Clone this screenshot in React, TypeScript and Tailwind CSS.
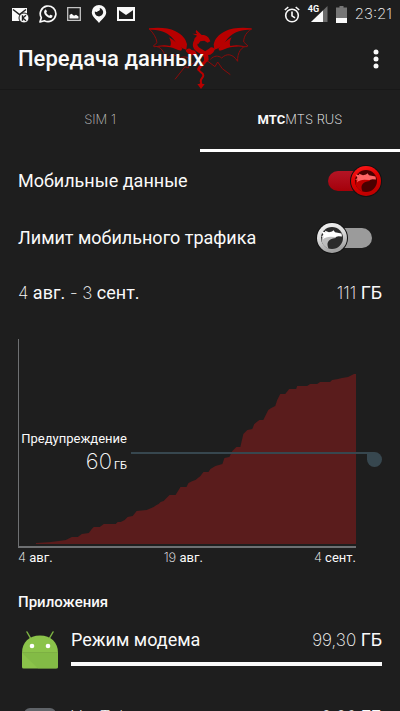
import React, { useState } from "react";
import { clsx } from "clsx";

const THIN = "font-['Inter','Roboto',sans-serif] font-extralight";

const Thin: React.FC<{ children: React.ReactNode; className?: string }> = ({ children, className }) => (
  <span className={clsx(THIN, className)}>{children}</span>
);

const StatusBar: React.FC = () => (
  <div className="flex h-7 items-center justify-between pl-3 pr-2">
    <div className="flex items-center gap-2.5">
      <svg width="17" height="17" viewBox="0 0 17 17">
        <path d="M0 2h15v13H0z" fill="currentColor" />
        <path d="M1 3.500l6.500 5 6.500-5" fill="none" stroke="#1e1e1e" strokeWidth="1.500" />
        <circle cx="12" cy="12" r="5" fill="currentColor" stroke="#1e1e1e" />
        <path d="M10.500 9.300v5.400M14 9.300l-3.200 2.700 3.200 2.700" fill="none" stroke="#1e1e1e" strokeWidth="1.400" />
      </svg>
      <svg width="18" height="18" viewBox="0 0 18 18">
        <path
          d="M1 17l1.300-4.300A7.800 7.800 0 1 1 5.400 15.700z"
          fill="none"
          stroke="currentColor"
          strokeWidth="1.700"
          strokeLinejoin="round"
        />
        <path
          d="M6 4.800c.5-.5 1-.3 1.300.3l.6 1.500c.1.300-.3.800-.7 1.200.7 1.400 1.800 2.300 3.200 2.900.5-.7.900-1.200 1.300-1l1.700.9c.4.300-.1 1.600-.8 2.100-1.200.8-3.500.2-5.400-1.600C5 9 4.300 6.500 6 4.800z"
          fill="currentColor"
        />
      </svg>
      <svg width="14" height="14" viewBox="0 0 14 14">
        <path d="M.7.700h12.600v12.600H.7z" fill="none" stroke="#c4c4c4" strokeWidth="1.300" />
        <path d="M2.500 11.500V8l2-1.200 2.500 2 2-1 2.500 1.700v2z" fill="currentColor" />
      </svg>
      <svg width="16" height="18" viewBox="0 0 16 18">
        <path d="M8 0A7.200 7.200 0 0 0 .8 7.200C.8 11.500 5 14 8 18c3-4 7.200-6.500 7.200-10.800A7.200 7.200 0 0 0 8 0z" fill="currentColor" />
        <path d="M8.500 3a4.200 4.200 0 1 1-4.600 3.200 1.700 1.700 0 0 0 3-.2 1.800 1.800 0 0 0 1.600-3z" fill="#1e1e1e" />
      </svg>
      <svg width="18" height="14" viewBox="0 0 18 14">
        <path d="M1 1h16v12H1z" fill="none" stroke="currentColor" strokeWidth="2" />
        <path d="M1 1h16v1.500L9 8 1 2.500z" fill="currentColor" />
      </svg>
    </div>
    <div className="flex items-center gap-2">
      <svg width="16" height="17" viewBox="0 0 16 17" fill="none" stroke="currentColor" strokeWidth="1.600">
        <circle cx="8" cy="9.500" r="6.300" />
        <path d="M8 5.500v4.300l3 2M.8 4L4.300 1M15.200 4l-3.500-3" />
      </svg>
      <div className="relative h-[18px] w-5">
        <svg width="20" height="18" viewBox="0 0 20 18">
          <path d="M19.500 1v16H3z" fill="#6b6b6b" />
          <path d="M15 5.500V17H3z" fill="currentColor" />
        </svg>
        <span className="absolute left-0 top-0 text-[9px] leading-[9px] font-bold">4G</span>
      </div>
      <svg width="11" height="17" viewBox="0 0 11 17">
        <path d="M3.500 0h4v1.500H11V17H0V1.500h3.500z" fill="#757575" />
        <path d="M0 12h11v5H0z" fill="currentColor" />
      </svg>
      <time className={clsx(THIN, "text-[15px] leading-5")}>23:21</time>
    </div>
  </div>
);

const Dragon: React.FC = () => (
  <svg
    width="110"
    height="70"
    viewBox="0 0 330 210"
    className="absolute left-[145px] top-[-6px]"
    aria-hidden="true"
  >
    <g fill="#b80000">
      <path d="M12 19c30-4 60-1 78 8 24 12 32 24 36 40l-2 16c-14-4-26-10-31-20-9-16-25-30-43-35-12-4-24-5-38-5z" />
      <path d="M72 46c14 8 28 20 40 34l-4 6c-12-2-20-8-32-10-16-3-34-3-50 0 14-6 32-8 50-4 4-8 0-18-4-26z" />
      <path d="M320 19c-30-4-60-1-78 8-24 12-32 24-36 40l2 16c14-4 26-10 31-20 9-16 25-30 43-35 12-4 24-5 38-5z" />
      <path d="M260 46c-14 8-28 20-40 34l4 6c12-2 20-8 32-10 16-3 34-3 50 0-14-6-32-8-50-4-4-8 0-18 4-26z" />
      {/* head, facing right, with swept horns */}
      <path d="M154 24l16 15c14-1 22 6 26 19l-8 4-10-6-12 2-6 8c-8-2-12-8-12-16l8-9-14-6 14 1-4-6z" />
      <path d="M122 86c6-8 12-8 18-2l10 2 6 12-16 2c-8-3-14-8-18-14zM210 82c-6-8-12-8-18-2l-12 8 2 12 14-2c8-4 10-8 14-16z" />
      <path d="M157 186l22 0-11 15zM168 172l5 16h-10z" />
    </g>
    <g fill="none" stroke="#b80000" strokeLinecap="round">
      <path d="M156 54c-10 14-6 24 8 32 14 7 22 14 20 26" strokeWidth="14" />
      <path d="M184 110c-2 16-22 20-23 32" strokeWidth="9" />
      <path d="M161 142c0 10 14 8 14 18 0 8-8 8-8 18" strokeWidth="6" />
    </g>
    <g fill="none" stroke="#8c0a0a" strokeWidth="3">
      <path d="M14 22c10 10 20 24 22 40l-12 11M26 73c20-2 36 16 36 47 12-26 28-26 42-10 10-8 26-8 36 8" />
      <path d="M318 22c-12 8-22 20-22 38l13 12M308 73c-18-2-32 20-30 45-14-22-32-26-48-10-10-8-22-8-34 4" />
      <path d="M150 120c-6 6-12 8-18 8l-2 10-10-4-30 38M186 116l24 18 8-14 14 20 24 18" />
    </g>
  </svg>
);

interface SwitchRowProps {
  id: string;
  label: string;
  initial: boolean;
}

const SwitchRow: React.FC<SwitchRowProps> = ({ id, label, initial }) => {
  const [on, setOn] = useState(initial);

  return (
    <div className="flex h-[57px] items-center justify-between px-[18px]">
      <label htmlFor={id} className="text-[18px] leading-6">
        {label}
      </label>
      <div className="relative h-8 w-[66px]">
        <input
          id={id}
          type="checkbox"
          role="switch"
          checked={on}
          onChange={() => setOn(!on)}
          className="absolute inset-0 z-10 cursor-pointer opacity-0"
        />
        <div
          className={clsx(
            "absolute left-3 top-[6px] h-5 w-11 rounded-full",
            on ? "bg-linear-to-b from-[#b31424] to-[#a50008]" : "bg-[#9b9b9b]"
          )}
        />
        <svg
          width="32"
          height="32"
          viewBox="0 0 32 32"
          className={clsx("absolute top-0", on ? "right-0" : "left-0")}
        >
          <defs>
            <linearGradient id={id + "-ring"} x1="0" y1="0" x2="0.3" y2="1">
              <stop offset="0" stopColor={on ? "#ff1c1c" : "#f5f5f5"} />
              <stop offset="0.500" stopColor={on ? "#e00000" : "#dcdcdc"} />
              <stop offset="1" stopColor={on ? "#c00000" : "#a0a0a0"} />
            </linearGradient>
          </defs>
          <circle cx="16" cy="16" r="16" fill="#121212" />
          <circle cx="16" cy="16" r="15" fill={`url(#${id}-ring)`} />
          <circle cx="16" cy="16" r="11" fill={on ? "#4a0000" : "#2b2b2b"} />
          <path
            d="M7 13c-3 5-1 11 5.500 13.500C11.500 24 11 22 12 20c1-2.500 4-3.500 7.500-4l1-2z"
            fill={on ? "#c00000" : "#bdbdbd"}
          />
          <path
            d="M5.500 9.500l4 .8-1-1.800 4.500 1.700 3-.7 1.500-1.200 1.500 2 6.500 1.200.5 3-3.500-.3-3 .8-5-.2c-3 .2-6 1-7.500 2.700l.5-3-2.500.5 2.500-2z"
            fill={on ? "#ff6464" : "#ffffff"}
          />
        </svg>
      </div>
    </div>
  );
};

// Cumulative traffic over the cycle, as [x, y] in a 338 x 207 box
const USAGE: [number, number][] = [
  [17, 204], [32, 203], [40, 202], [47, 201], [53, 198], [59, 198], [63, 195], [70, 194],
  [73, 190], [75, 188], [81, 188], [85, 185], [97, 185], [99, 183], [102, 183], [106, 181],
  [109, 178], [114, 177], [118, 172], [128, 171], [135, 168], [138, 166], [140, 165], [142, 163],
  [145, 162], [151, 156], [157, 156], [162, 148], [168, 148], [170, 144], [174, 142], [177, 141],
  [182, 137], [185, 133], [190, 133], [192, 130], [197, 127], [204, 125], [206, 119], [211, 118],
  [214, 112], [218, 108], [222, 108], [225, 95], [229, 91], [234, 90], [236, 85], [241, 81],
  [245, 81], [250, 71], [253, 69], [257, 67], [259, 61], [262, 55], [267, 55], [271, 50],
  [278, 50], [279, 47], [289, 47], [292, 45], [299, 45], [302, 43], [312, 43], [314, 41],
  [320, 40], [324, 39], [330, 38], [336, 35], [338, 35],
];

const UsageChart: React.FC = () => (
  <section className="mt-5 pl-[18px] pr-11">
    <div className="relative h-[209px] border-b-2 border-l border-[#6e7072]">
      <svg viewBox="0 0 338 207" preserveAspectRatio="none" className="block h-full w-full">
        <polygon points={`17,205 ${USAGE.join(" ")} 338,205`} fill="#5a1c1c" />
      </svg>
      <div className="absolute left-0 top-[91px] flex w-[108px] flex-col items-end whitespace-nowrap">
        <span className="text-[13px] leading-[18px]">Предупреждение</span>
        <span className="flex items-baseline gap-0.5 leading-[26px]">
          <Thin className="text-[22px]">60</Thin>
          <span className="text-[11px]">ГБ</span>
        </span>
      </div>
      <div className="absolute left-28 right-[-26px] top-[113px] flex h-4 items-start">
        <div className="h-0.5 flex-1 bg-[#37474f]" />
        <div className="size-[15px] rounded-full rounded-tl-none bg-[#37474f]" />
      </div>
    </div>
    <div className="flex justify-between text-[13px] leading-[19px]">
      <span>
        <Thin>4</Thin> авг.
      </span>
      <span>
        <Thin>19</Thin> авг.
      </span>
      <span>
        <Thin>4</Thin> сент.
      </span>
    </div>
  </section>
);

const AndroidIcon: React.FC = () => (
  <svg width="36" height="38" viewBox="0 0 36 38">
    <path d="M5 1l4 7M31 1l-4 7" stroke="#7cb342" strokeWidth="1.500" strokeLinecap="round" />
    <path d="M0 22C0 11 7 4.500 18 4.500S36 11 36 22z" fill="#8bc34a" />
    <path d="M0 22h36v14a1.500 1.500 0 0 1-1.500 1.500h-33A1.500 1.500 0 0 1 0 36z" fill="#8bc34a" />
    <path d="M0 22h36v14L34 37.500H16z" fill="#7cb342" opacity="0.500" />
    <path d="M0 21.500h36" stroke="#7db043" />
    <circle cx="10" cy="15" r="2.300" fill="#fff" />
    <circle cx="26" cy="15" r="2.300" fill="#fff" />
  </svg>
);

interface AppRowProps {
  icon: React.ReactNode;
  name: React.ReactNode;
  amount: string;
  share: number;
}

const AppRow: React.FC<AppRowProps> = ({ icon, name, amount, share }) => (
  <li className="flex h-[77px] gap-[13px] pl-[22px] pr-[18px]">
    <div className="w-9 pt-[5px]">{icon}</div>
    <div className="flex-1">
      <div className="flex h-[27px] items-center justify-between text-[18px] leading-6">
        <span>{name}</span>
        <span>
          <Thin className="text-[17px]">{amount}</Thin> ГБ
        </span>
      </div>
      <div className="mt-[9px] h-1 bg-[#fafafa]" style={{ width: `${share}%` }} />
    </div>
  </li>
);

export default function App() {
  const [tab, setTab] = useState(1);

  return (
    <div className="h-screen overflow-hidden bg-[#1e1e1e] font-['Roboto','Noto_Sans',sans-serif] text-[#fafafa]">
      <StatusBar />
      <header className="relative flex h-[62px] items-center justify-between border-b border-[#181818] px-[18px]">
        <Dragon />
        <h1 className="relative text-[22px] leading-7 font-medium">Передача данных</h1>
        <button type="button" aria-label="Ещё" className="flex h-8 w-3 cursor-pointer items-center justify-center">
          <svg width="6" height="20" viewBox="0 0 6 20" fill="currentColor">
            <circle cx="3" cy="3" r="2.500" />
            <circle cx="3" cy="10" r="2.500" />
            <circle cx="3" cy="17" r="2.500" />
          </svg>
        </button>
      </header>

      <div role="tablist" className="grid h-[62px] grid-cols-2 text-[13px]">
        <button
          type="button"
          role="tab"
          aria-selected={tab === 0}
          onClick={() => setTab(0)}
          className={clsx("cursor-pointer border-b-3", tab === 0 ? "border-white" : "border-transparent")}
        >
          <Thin className="text-[#c4c4c4]">SIM 1</Thin>
        </button>
        <button
          type="button"
          role="tab"
          aria-selected={tab === 1}
          onClick={() => setTab(1)}
          className={clsx("cursor-pointer border-b-3", tab === 1 ? "border-white" : "border-transparent")}
        >
          <b>МТС</b>
          <Thin>MTS RUS</Thin>
        </button>
      </div>

      <SwitchRow id="mobile-data" label="Мобильные данные" initial />
      <SwitchRow id="data-limit" label="Лимит мобильного трафика" initial={false} />

      <div className="flex h-[53px] items-center justify-between px-[18px] text-[18px]">
        <span>
          <Thin className="text-[17px]">4</Thin> авг. <Thin>-</Thin> <Thin className="text-[17px]">3</Thin> сент.
        </span>
        <span>
          <Thin className="text-[17px]">111</Thin> ГБ
        </span>
      </div>

      <UsageChart />

      <h2 className="mt-6 px-[18px] text-[15px] leading-[22px] font-medium">Приложения</h2>
      <ul className="mt-[13px]">
        <AppRow icon={<AndroidIcon />} name="Режим модема" amount="99,30" share={100} />
        <AppRow
          icon={<div className="ml-0.5 h-9 w-8 rounded-md bg-[#5f6368]" />}
          name={<Thin className="text-[17px]">YouTube</Thin>}
          amount="2,86"
          share={3}
        />
      </ul>
    </div>
  );
}
